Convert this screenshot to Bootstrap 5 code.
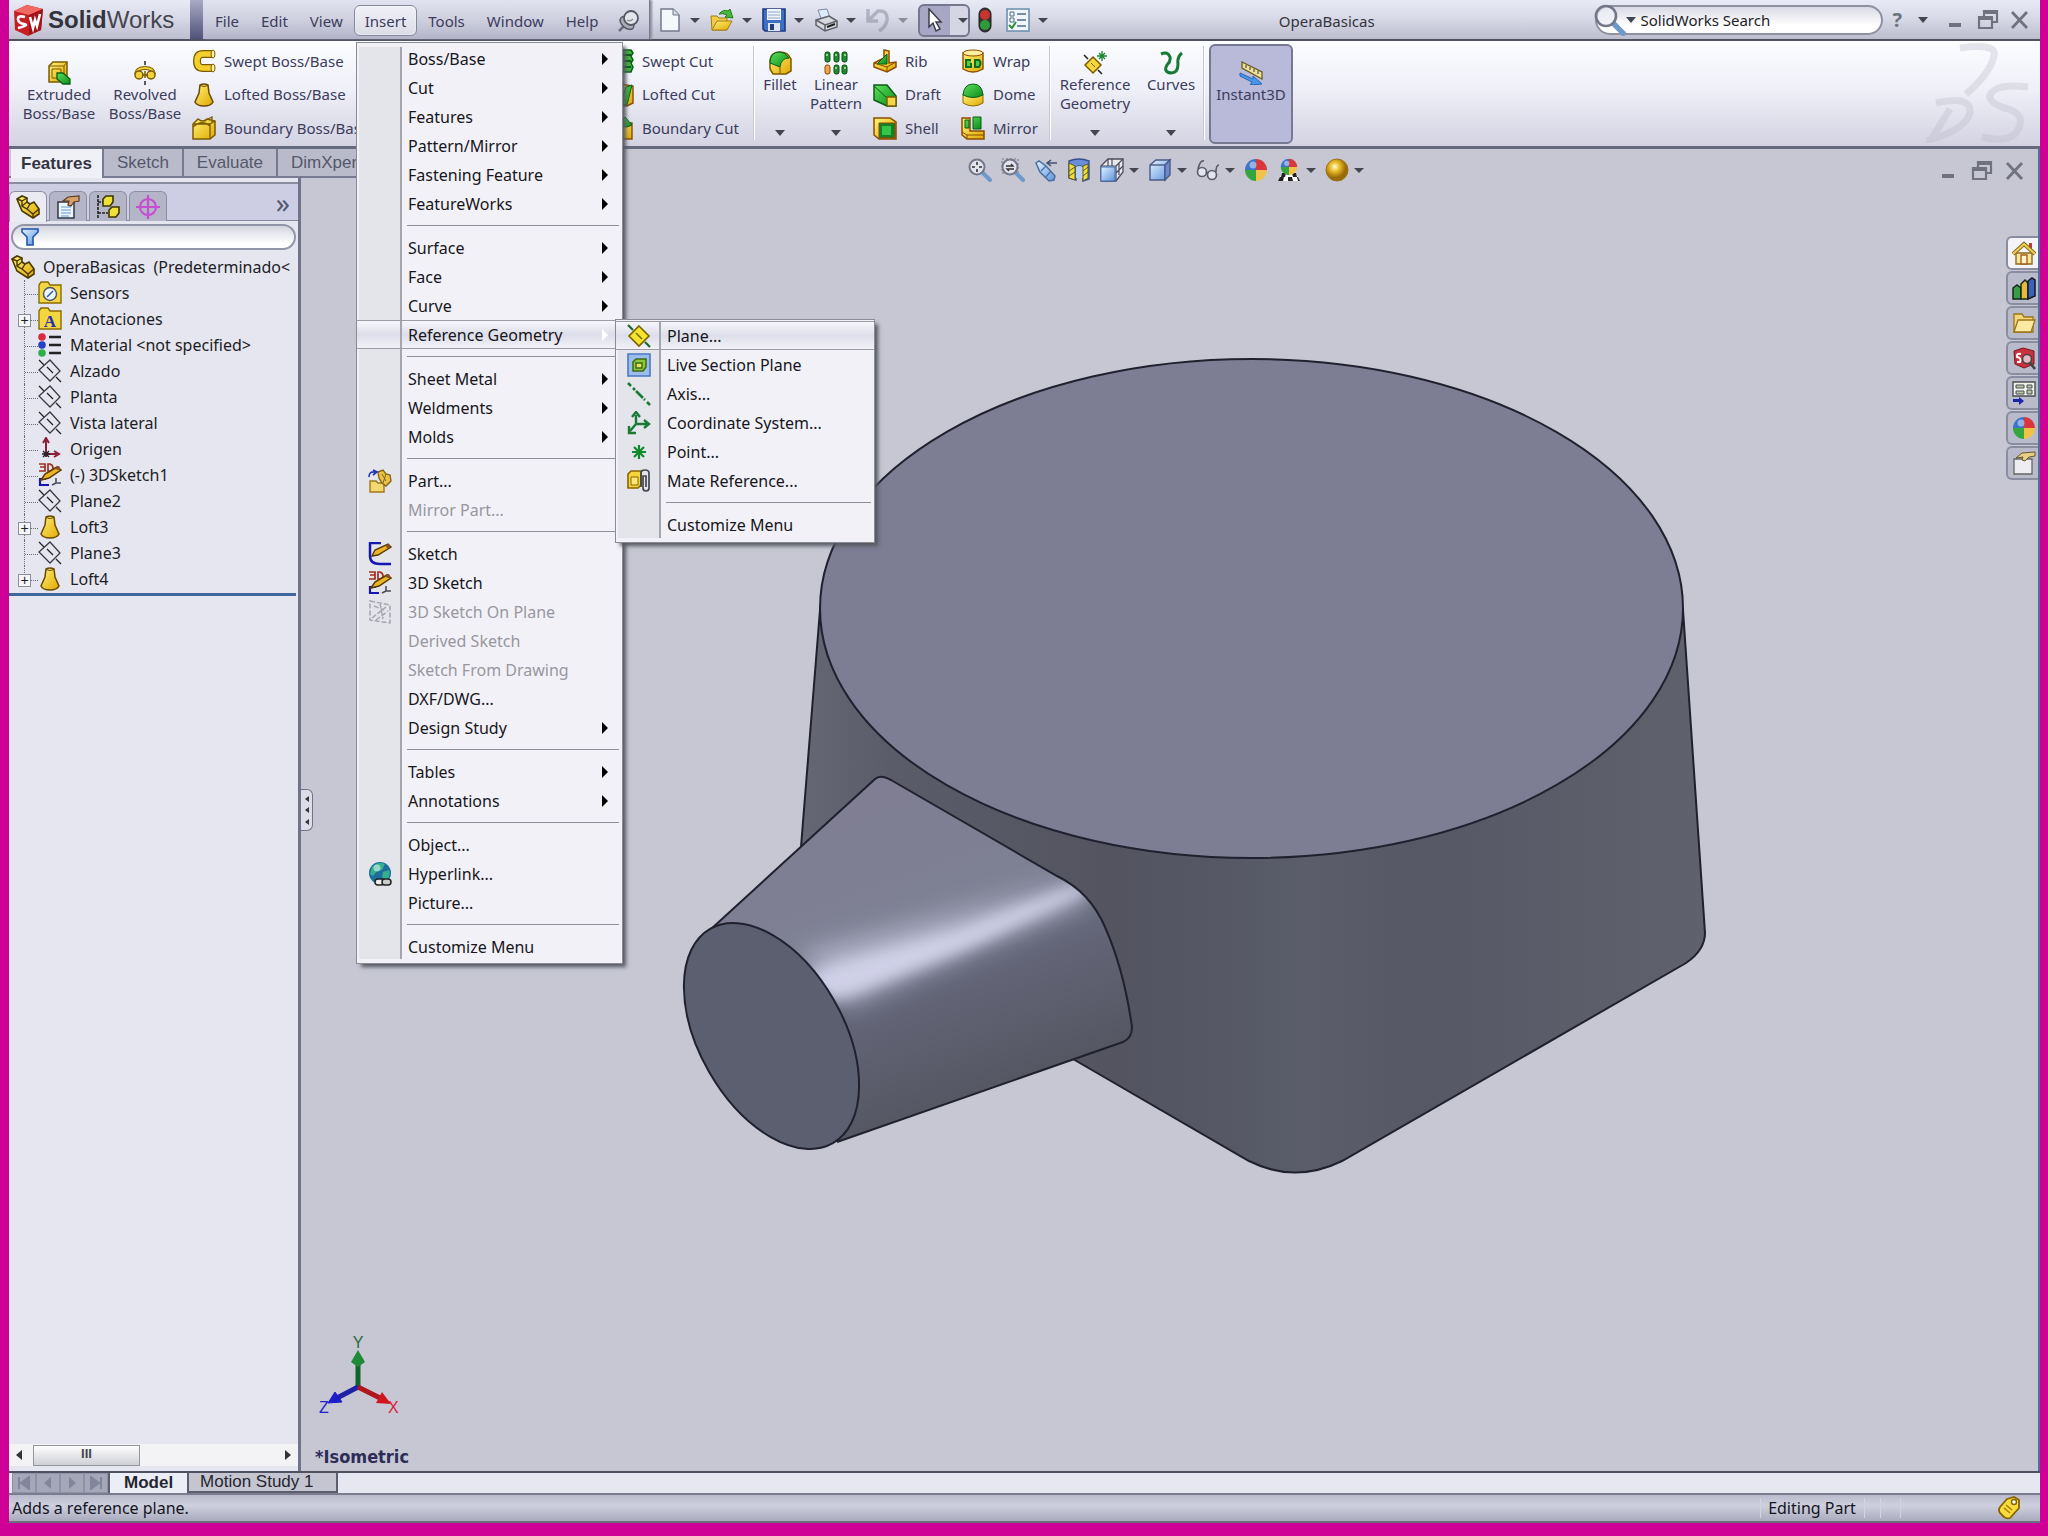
<!DOCTYPE html>
<html lang="en">
<head>
<meta charset="utf-8">
<meta name="viewport" content="width=device-width, initial-scale=1">
<title>OperaBasicas - SolidWorks</title>
<link href="https://cdn.jsdelivr.net/npm/bootstrap@5.3.0/dist/css/bootstrap.min.css" rel="stylesheet">
<style>
:root{--ui:"Noto Sans","Open Sans",sans-serif;--arial:"Liberation Sans",Arial,sans-serif;--ink:#3c3c5c;--edge:#5e6276;--view:#c6c7d3;--pane:#e5e6ef}
body{background:#cf0096;font-family:var(--ui);font-size:16px;line-height:20px;color:#1d1d26;overflow:hidden}
button{background:none;border:0;padding:0;color:inherit;font:inherit;line-height:inherit;white-space:nowrap}
svg.ic{width:24px;height:24px;display:block;flex:none}
.frame{padding:0 8px 13px 9px}
.caret{width:0;height:0;flex:none;border:5px solid transparent;border-top:6px solid #44464f;border-bottom:0}
/* title bar */
.titlebar{height:41px;background:linear-gradient(#e8eaf6,#d9dae8 45%,#bdbdce);border-bottom:2px solid #4e5160}
.brand{width:181px;padding-left:3px;gap:4px;font:700 24px/26px var(--arial);color:#33343c}
.brand b+span{font-weight:400;color:#44454f}
.brand svg{width:32px;height:32px;flex:none}
.divider{width:13px;background:linear-gradient(#a9aac2,#50527a)}
.menus{width:447px;background:linear-gradient(#e2e3f0,#cfd0df 50%,#b3b4c8);border-right:1px solid #7b7d8e;box-shadow:2px 0 2px #8b8d9d;padding:2px 0 0 1px}
.menus .top{height:31px;padding:0 10px;border:1px solid transparent;border-radius:6px;color:var(--ink);font-size:15px}
.menus .top.show{border-color:#85879a;background:linear-gradient(#f0f1f8,#dcdce8);box-shadow:inset 0 0 2px #fff}
.quick{padding-left:8px;padding-top:1px}
.quick .tool{gap:8px;margin-right:10px}
.tool{display:flex;align-items:center}
.quick .pick{height:33px;border:2px solid #75778f;border-radius:6px;background:linear-gradient(90deg,#a7a7c4 62%,#d5d5e4 62%);width:52px;justify-content:space-between;padding:0 4px 0 6px;margin-right:8px}
.doc-title{font-size:15px;color:#34343e;padding-top:2px}
.finder{width:288px;height:30px;border:2px solid #8f91a0;border-radius:15px;background:linear-gradient(#d9d9e4,#fff 70%);margin-right:9px}
.finder input{border:0;background:none;outline:0;width:200px;font-size:15px;padding:0;color:#1d1d26}
.finder input::placeholder{color:#1d1d26;opacity:1}
.finder svg{width:32px;height:32px;margin:0 0 0 -3px}
.wctl svg{width:24px;height:24px}
/* ribbon */
.ribbon{height:108px;background:linear-gradient(#fbfdff,#eff0f8 45%,#d3d3e2);border-bottom:3px solid #666a7d;color:var(--ink);font-size:15px;line-height:19px;padding-left:7px;z-index:1}
.ribbon .big{display:flex;flex-direction:column;align-items:center;text-align:center;white-space:normal;padding-top:10px}
.ribbon .big.low{padding-top:20px}
.ribbon .big .caret{margin-top:auto;margin-bottom:10px}
.w86{width:86px}.w50{width:50px}.w62{width:62px}.w88{width:88px}.w64{width:64px}
.ribbon .stack{display:flex;flex-direction:column;justify-content:space-between;padding:6px 0 4px 2px}
.stack button{display:flex;align-items:center;gap:8px;height:28px}
.ribbon .stack.s1{width:420px;padding-left:4px}.stack.s2{width:145px}.stack.s3{width:88px}.stack.s4{width:90px}
.rule{width:2px;background:linear-gradient(90deg,#c6c7d5 50%,#fff 50%);margin:5px 0 6px;flex:none}
.big.instant{width:84px;margin:3px 0 2px 4px;border:2px solid #777991;border-radius:6px;background:#b9b9da;padding-top:15px}
.dsmark{width:104px;height:100px;margin:2px 10px 0 auto}
/* left column */
.side{width:292px;flex:none;z-index:1}
.cmd-tabs{height:29px;width:400px;background:var(--view);border-bottom:2px solid #777a90;margin-right:-108px;padding-left:2px}
.cmd-tabs button{height:27px;padding:0 13px;background:#b9bbca;border-right:2px solid #777a90;color:#55576a;font:400 17px/25px var(--arial)}
.cmd-tabs button.on{background:#f0f1f7;color:#333443;font-weight:700;height:29px;padding:0 10px}
.tree-pane{border-right:3px solid #70738a;background:var(--pane);padding-top:4px}
.tree-tabs{border-top:2px solid #8a8ca0;border-bottom:1px solid #85879b;background:#cdcee3;height:39px;padding:7px 8px 0 0}
.tree-tabs .tt{width:38px;height:30px;margin-right:2px;border:1px solid #8d8fa3;border-bottom:0;border-radius:6px 6px 0 0;background:#b4b6c8;display:flex;align-items:center;justify-content:center}
.tree-tabs .tt.on{background:#e9eaf2;height:31px}
.more{font-size:28px;line-height:22px;color:#55586c}
.filter{height:26px;border:2px solid #9395a8;border-radius:13px;margin:3px 2px 4px 2px;background:linear-gradient(#d4d5e0,#fff 80%);padding-left:8px}
.filter input{border:0;background:none;outline:0;width:200px;height:20px}
.tree{list-style:none;margin:0;padding:0 0 1px 2px;border-bottom:3px solid #3e659c;margin-right:2px}
.tree li{height:26px;display:flex;align-items:center;position:relative;padding-left:27px;gap:8px;white-space:pre}
.tree li.root{padding-left:0}
.tree li:not(.root)::before{content:"";position:absolute;left:13px;top:0;bottom:0;border-left:1px dotted #6b6d78}
.tree li:last-child::before{bottom:13px!important}
.tree li:not(.root)::after{content:"";position:absolute;left:14px;top:14px;width:13px;border-top:1px dotted #6b6d78}
.tree .plus{position:absolute;left:7px;top:8px;width:13px;height:13px;border:1px solid #8b8d98;background:#f6f6fa;font:400 14px/10px var(--arial);text-align:center;z-index:1}
.hscroll{height:22px;background:#f3f3f5;margin-top:auto;margin-bottom:5px;padding:0 7px}
.hscroll .thumb{width:107px;height:21px;border:1px solid #94969d;background:linear-gradient(#fdfdfd,#cfd0d6);margin-left:11px;color:#44464f;font:700 13px/16px var(--arial);text-align:center}
.lar,.rar{width:0;height:0;border:5px solid transparent}
.lar{border-right:6px solid #333;border-left:0}.rar{border-left:6px solid #333;border-right:0}
/* viewport */
.viewport{background:var(--view);position:relative;border-right:2px solid #4d6f9c;min-width:0}
.model{position:absolute;inset:0;width:100%;height:100%}
.hud{position:relative;padding:9px 0 0 2px}
.hud .tool{gap:5px;margin-right:9px}
.hud .caret,.quick .caret{border-width:5px 5px 0}
.docctl{position:absolute;right:11px;top:10px;gap:9px}
.grip{position:absolute;left:0;top:640px;width:12px;height:42px;background:#dcdde8;border:1px solid #6f7288;border-left:0;border-radius:0 6px 6px 0;display:flex;flex-direction:column;justify-content:space-evenly;align-items:center}
.grip .lar{border-width:3px 4px 3px 0}
.tasks{position:absolute;right:0;top:87px;gap:1px}
.tasks button{width:32px;height:34px;border:2px solid #8a8ca0;border-right:0;border-radius:6px 0 0 6px;background:#b9bbca;padding-left:4px}
.tasks button.on{background:#f4f4f8}
.triad{position:absolute;left:14px;bottom:46px;width:84px;height:94px}
.iso{position:absolute;left:14px;bottom:4px;font:700 18px/20px "DejaVu Sans Condensed","DejaVu Sans",sans-serif;color:#2d2d58}
/* bottom */
.sheets{height:24px;background:#e6e7f1;border-top:2px solid #4e5160;border-bottom:2px solid #7b7d8e;padding-left:3px}
.sheets .nav-b{width:24px;height:20px;background:#a4a7b8;border:1px solid #8f92a5;display:flex;align-items:center;justify-content:center}
.sheets .nav-b svg{width:14px;height:14px}
.sheets .sheet{font:400 17px/18px var(--arial);height:20px;border-right:2px solid #5c5e70;border-bottom:2px solid #5c5e70;background:#c4c5d1;padding:0 22px 0 11px;color:#26262f}
.sheets .sheet.on{font-weight:700;background:#eceef7;padding:0 14px;border-left:2px solid #5c5e70;border-bottom:0}
.status{height:28px;background:linear-gradient(#b9bacb,#cfd0df 40%,#a9abbd);border-bottom:2px solid #6d6f80;padding:0 19px 0 3px;color:#15151d}
.cell{border:solid #d3d4e0;border-width:0 1px;padding:0 8px 0 7px;margin-right:15px}
/* menus */
.sw-menu{position:absolute;z-index:10;background:#f2f1f7;border:1px solid #8a8b95;box-shadow:4px 4px 4px -1px #55575f;color:#16161c;margin:0;list-style:none}
.menu-main{left:356px;top:42px;width:267px;padding:1px 0 2px}
.menu-sub{left:615px;top:319px;width:260px;padding:1px 0 3px}
.sw-menu::before{content:"";position:absolute;left:2px;top:4px;bottom:4px;width:43px;background:#e3e5ea;border-right:2px solid #a4a5ad}
.sw-menu li{position:relative}
.sw-menu button{display:flex;align-items:center;width:100%;height:29px;text-align:left}
.sw-menu button>.slot{width:51px;padding-left:11px;flex:none}
.sw-menu button.rest{border:solid #9b9ca6;border-width:1px 0;background:linear-gradient(90deg,transparent 43px,#a4a5ad 43px,#a4a5ad 45px,transparent 45px),linear-gradient(#f6f6fb,#dddeea 50%,#f2f1f7)}
.sw-menu button:disabled{color:#97979f}
.sw-menu hr{margin:7px 3px 7px 50px;border:0;border-top:1px solid #8f9099;opacity:1;height:0}
.sw-menu .rar{margin-left:auto;margin-right:14px;border-width:6px 0 6px 6px;border-left-color:#000}
.sw-menu .rar.lite{border-left-color:#fff}
</style>
<script src="https://cdn.jsdelivr.net/npm/bootstrap@5.3.0/dist/js/bootstrap.bundle.min.js"></script>
</head>
<body>
<svg width="0" height="0" class="position-absolute" aria-hidden="true">
<defs>
<linearGradient id="gy" x2="1" y2="1"><stop stop-color="#fff27a"/><stop offset="1" stop-color="#e0a800"/></linearGradient>
<linearGradient id="gg" x2="1" y2="1"><stop stop-color="#5fe35a"/><stop offset="1" stop-color="#0a8a1c"/></linearGradient>
<linearGradient id="gb" x2="1" y2="1"><stop stop-color="#e5f3ff"/><stop offset="1" stop-color="#5b93dd"/></linearGradient>
<radialGradient id="gold" cx=".4" cy=".35"><stop stop-color="#fffbe0"/><stop offset=".4" stop-color="#eec22e"/><stop offset="1" stop-color="#9a6a08"/></radialGradient>
<symbol id="plane" viewBox="0 0 24 24"><path d="M1 1l5 5M18 18l5 5M9 8l6 6" stroke="#222" stroke-width="1.3"/><path d="M12 1l10 11-10 10L1 11z" fill="none" stroke="#3a3a44" stroke-width="1.3"/></symbol>
<symbol id="loft" viewBox="0 0 24 24"><path d="M8 2q4-2 8 0l1 8 4 9q-2 4-9 4t-9-4l4-9z" fill="url(#gy)" stroke="#6b4a00" stroke-width="1.5"/><path d="M8 2.500q4 2 8 0" fill="none" stroke="#6b4a00"/></symbol>
<symbol id="part" viewBox="0 0 24 24"><path d="M1 4l5-3 5 2v4l3 2 4-2 5 7v5l-6 4-11-7z" fill="url(#gy)" stroke="#4b3900" stroke-width="1.600"/><path d="M1 4l5 2 5-3M6 6v5l5 3 3-5M11 14l6 5 6-5M17 19v4M11 7l-5 4" fill="none" stroke="#4b3900" stroke-width="1.400"/></symbol>
<symbol id="folder" viewBox="0 0 24 24"><path d="M1 4l2-3h7l2 3h11v18H1z" fill="#f3d740" stroke="#8a6c00" stroke-width="1.4"/></symbol>
<symbol id="sk3d" viewBox="0 0 24 24"><path d="M1 1h6v7H1m1-4h5M10 1v7h2q3 0 3-3t-3-4z" fill="none" stroke="#a32c20" stroke-width="1.7"/><path d="M8 16H2v6h9" fill="none" stroke="#1616b8" stroke-width="2.200"/><path d="M14 22l4-2v-5M18 20h5" fill="none" stroke="#4a4c58" stroke-width="1.600"/><path d="M3 17l4-6L19 4l4 3-12 8z" fill="#edb526" stroke="#5a3c00" stroke-width="1.500"/><circle cx="20" cy="5" r="2" fill="#8a4a2c"/></symbol>
<symbol id="sk" viewBox="0 0 24 24"><path d="M13 1H2v13q0 8 10 8h11" fill="none" stroke="#1616b0" stroke-width="2.500"/><path d="M4 14l3-6L20 2l3 3L10 13z" fill="#edb526" stroke="#5a3c00" stroke-width="1.4"/><circle cx="20" cy="4" r="2" fill="#8a4a2c"/></symbol>
<symbol id="mag" viewBox="0 0 24 24"><path d="M15 15l7 7" stroke="#6e9acb" stroke-width="4" stroke-linecap="round"/><circle cx="9" cy="9" r="7.500" fill="#eef0f8" fill-opacity=".7" stroke="#74778a" stroke-width="2"/></symbol>
<symbol id="ball" viewBox="0 0 24 24"><path d="M12 12V1a11 11 0 0 1 11 11z" fill="#d8383c"/><path d="M12 12h11a11 11 0 0 1-11 11z" fill="#f2c14a"/><path d="M12 12v11A11 11 0 0 1 1 12z" fill="#35a53e"/><path d="M12 12H1A11 11 0 0 1 12 1z" fill="#3c73cc"/><circle cx="9" cy="7" r="3.500" fill="#fff" opacity=".45"/></symbol>
<symbol id="cube" viewBox="0 0 24 24"><path d="M2 7l6-5h14l-5 5v15H2z" fill="url(#gb)" stroke="#4a5a86" stroke-width="1.4"/><path d="M17 7l5-5v15l-5 5z" fill="#6d89cf" stroke="#4a5a86" stroke-width="1.4"/><path d="M2 7h15" stroke="#4a5a86" stroke-width="1.4"/></symbol>
<symbol id="wmin" viewBox="0 0 24 24"><path d="M5 15h12v4H5z" fill="#70727f"/></symbol>
<symbol id="wres" viewBox="0 0 24 24"><path d="M8 8V3h13v11h-5M8 5h13M3 9h13v11H3zM3 11h13" fill="none" stroke="#70727f" stroke-width="2.200"/></symbol>
<symbol id="wx" viewBox="0 0 24 24"><path d="M4 4l15 16M19 4L4 20" stroke="#70727f" stroke-width="2.800"/></symbol>
<symbol id="hand" viewBox="0 0 24 24"><path d="M2 7h16v16H2z" fill="#eef4fb" stroke="#333844" stroke-width="1.500"/><path d="M5 12h10M5 15h10M5 18h10M5 21h8" stroke="#5f9ad0" stroke-width="1.200"/><path d="M7 6l5-4 11-1v5l-5 1-3 4-3-1 1-4z" fill="#d9a06c" stroke="#5a3a1c" stroke-width="1.200"/></symbol>
</defs>
</svg>

<div class="frame vh-100 d-flex flex-column">
<header class="titlebar d-flex align-items-stretch flex-shrink-0">
 <div class="brand d-flex align-items-center">
  <svg viewBox="0 0 32 32"><path d="M2 7L15 1l16 4-2 21-13 6L3 26z" fill="#c51f24"/><path d="M2 7L15 1l16 4-14 6z" fill="#ee6a63"/><path d="M17 11v20l12-5 2-21z" fill="#a11318"/><path d="M13 13q-7-2-7 2t6 5-6 4M18 13l3 11 2-8 2 6 3-12" fill="none" stroke="#fff" stroke-width="2.600"/></svg>
  <div><b>Solid</b><span>Works</span></div>
 </div>
 <div class="divider"></div>
 <nav class="menus d-flex align-items-center">
  <button class="top">File</button><button class="top">Edit</button><button class="top">View</button><button class="top show" aria-expanded="true">Insert</button><button class="top">Tools</button><button class="top">Window</button><button class="top">Help</button>
  <button class="ms-auto me-2" aria-label="Pin"><svg class="ic" viewBox="0 0 24 24"><path d="M2 22l5-5" stroke="#6d6f7c" stroke-width="2.500"/><ellipse cx="10" cy="14" rx="8" ry="5" transform="rotate(40 10 14)" fill="#aaacb8" stroke="#555763" stroke-width="1.500"/><circle cx="14" cy="9" r="7" fill="#e4e5ec" stroke="#555763" stroke-width="1.800"/><path d="M10 11q3 2 6-1" fill="none" stroke="#8b8d99" stroke-width="1.500"/></svg></button>
 </nav>
 <div class="quick d-flex align-items-center">
  <button class="tool" aria-label="New"><svg class="ic" viewBox="0 0 24 24"><path d="M3 1h12l6 6v16H3z" fill="#f4f8fc" stroke="#737b8a" stroke-width="1.500"/><path d="M15 1v6h6" fill="#cfdbe8" stroke="#737b8a"/></svg><i class="caret"></i></button>
  <button class="tool" aria-label="Open"><svg class="ic" viewBox="0 0 24 24"><path d="M1 8h6l2 2h8v12H2z" fill="#f1cc4a" stroke="#a47e10"/><path d="M2 22l5-9h15l-5 9z" fill="url(#gy)" stroke="#a47e10"/><path d="M9 6q4-5 9-3l2-2 3 9-8-1 2-2q-4-2-8-1z" fill="#46b83c" stroke="#267a1e"/></svg><i class="caret"></i></button>
  <button class="tool" aria-label="Save"><svg class="ic" viewBox="0 0 24 24"><path d="M1 1h22v22H3l-2-2z" fill="#3d6fc4" stroke="#1f3b80" stroke-width="1.600"/><path d="M5 1h14v11H5z" fill="#f2f6fc"/><path d="M6 4h12M6 7h12M6 10h12" stroke="#8aa4c8"/><path d="M6 15h12v8H6z" fill="#dde4ee"/><path d="M8 16h4v6H8z" fill="#1f3b80"/></svg><i class="caret"></i></button>
  <button class="tool" aria-label="Print"><svg class="ic" viewBox="0 0 24 24"><path d="M4 2l9-1 3 9-8 3z" fill="#dcecfb" stroke="#7e8aa0"/><path d="M2 12l13-4 8 5v6l-12 4-9-6z" fill="#d8d9de" stroke="#5f616b" stroke-width="1.500"/><path d="M2 12l9 5 12-4M11 17v6" fill="none" stroke="#5f616b" stroke-width="1.500"/><path d="M13 19l8-3" stroke="#222" stroke-width="2"/></svg><i class="caret"></i></button>
  <button class="tool opacity-50" aria-label="Undo"><svg class="ic" viewBox="0 0 24 24"><path d="M2 1v12h10M3 12L12 3q10-1 9 9-1 7-8 11" fill="none" stroke="#85879a" stroke-width="3.500"/></svg><i class="caret"></i></button>
  <button class="tool pick" aria-label="Select"><svg class="ic" viewBox="0 0 24 24"><path d="M3 1l12 13h-5l4 7-4 2-3-8-4 4z" fill="#fff" stroke="#3b3d4a" stroke-width="1.500"/></svg><i class="caret"></i></button>
  <button class="tool" aria-label="Rebuild"><svg width="14" height="26" viewBox="0 0 14 26"><rect x="1" y="1" width="12" height="24" rx="6" fill="#333" stroke="#222"/><circle cx="7" cy="8" r="5" fill="#c9342e"/><circle cx="7" cy="18" r="5" fill="#2f9c3a"/></svg></button>
  <button class="tool ms-1" aria-label="Options"><svg class="ic" viewBox="0 0 24 24"><path d="M1 1h22v22H1z" fill="#f0f6fb" stroke="#6b8fae" stroke-width="1.600"/><path d="M11 6h9M11 12h9M11 18h9" stroke="#506a88" stroke-width="1.500"/><path d="M4 4h4v4H4zM4 10h4v4H4z" fill="none" stroke="#506a88"/><path d="M3 17l3 3 4-6" fill="none" stroke="#2a8c2e" stroke-width="2"/></svg><i class="caret"></i></button>
 </div>
 <div class="doc-title flex-grow-1 text-center align-self-center">OperaBasicas</div>
 <div class="finder d-flex align-items-center align-self-center">
  <svg viewBox="0 0 24 24"><use href="#mag"/></svg><i class="caret me-1"></i><input type="search" aria-label="SolidWorks Search" placeholder="SolidWorks Search">
 </div>
 <div class="wctl d-flex align-items-center me-2">
  <button class="fw-bold fs-5 text-secondary" aria-label="Help">?</button><i class="caret mx-3"></i>
  <button aria-label="Minimize"><svg><use href="#wmin"/></svg></button><button class="mx-2" aria-label="Restore"><svg><use href="#wres"/></svg></button><button aria-label="Close"><svg><use href="#wx"/></svg></button>
 </div>
</header>

<section class="ribbon d-flex align-items-stretch flex-shrink-0">
 <button class="big low w86"><svg class="ic" viewBox="0 0 24 24"><path d="M2 5l4-4h14v16l-3 4H2z" fill="url(#gy)" stroke="#7b5b00" stroke-width="1.500"/><path d="M5 8h9v9H5zM2 5h15v16M17 5l3-4" fill="none" stroke="#7b5b00"/><path d="M10 12h6l7 6v5h-7l-6-5z" fill="url(#gg)" stroke="#0b5d16" stroke-width="1.300"/></svg>Extruded Boss/Base</button>
 <button class="big low w86"><svg class="ic" viewBox="0 0 24 24"><path d="M12 0v4M12 20v4" stroke="#333" stroke-width="1.600"/><path d="M3 13Q4 7 12 7t9 6" fill="none" stroke="#7b5b00" stroke-width="4"/><path d="M3 13Q4 7 12 7t9 6" fill="none" stroke="#f2d23a" stroke-width="2"/><circle cx="6" cy="14" r="4" fill="#f2d23a" stroke="#7b5b00" stroke-width="1.500"/><circle cx="18" cy="14" r="4" fill="#f2d23a" stroke="#7b5b00" stroke-width="1.500"/><path d="M9 14h6M12 10v7" stroke="#7b5b00" stroke-width="1.500"/></svg>Revolved Boss/Base</button>
 <div class="stack s1">
  <button><svg class="ic" viewBox="0 0 24 24"><path d="M22 5H11q-6 0-6 7t6 7h11" fill="none" stroke="#7b5b00" stroke-width="8"/><path d="M22 5H11q-6 0-6 7t6 7h11" fill="none" stroke="#f3d02c" stroke-width="5.500"/><ellipse cx="21" cy="5" rx="2" ry="4" fill="#fff0a0" stroke="#7b5b00"/><ellipse cx="21" cy="19" rx="2" ry="4" fill="#fff0a0" stroke="#7b5b00"/></svg>Swept Boss/Base</button>
  <button><svg class="ic"><use href="#loft"/></svg>Lofted Boss/Base</button>
  <button><svg class="ic" viewBox="0 0 24 24"><path d="M1 8l5-5q5 4 9 0l8 2v14l-5 4H1z" fill="url(#gy)" stroke="#7b5b00" stroke-width="1.500"/><path d="M1 8h17v15M18 8l5-3M1 11q9-8 17-1M12 5l8-4v5" fill="none" stroke="#7b5b00" stroke-width="1.300"/></svg>Boundary Boss/Base</button>
 </div>
 <div class="stack s2">
  <button><svg class="ic" viewBox="0 0 24 24"><path d="M5 1h16l2 3-2 3 2 4-2 3 2 4-2 5H5z" fill="#3db53a" stroke="#0b5d16" stroke-width="1.500"/><path d="M5 6h16M5 12h16M5 18h16" stroke="#0b5d16" stroke-width="2"/></svg>Swept Cut</button>
  <button><svg class="ic" viewBox="0 0 24 24"><path d="M5 5l6-4 12 2v17l-6 3H5z" fill="url(#gy)" stroke="#8d4b00" stroke-width="1.400"/><path d="M10 22l6-18 6-2-5 20z" fill="url(#gg)" stroke="#0b5d16"/></svg>Lofted Cut</button>
  <button><svg class="ic" viewBox="0 0 24 24"><path d="M4 10l4-3h14v16H4z" fill="url(#gy)" stroke="#8d4b00" stroke-width="1.400"/><path d="M8 10l7-9 7 8-5 2z" fill="url(#gg)" stroke="#0b5d16"/></svg>Boundary Cut</button>
 </div>
 <div class="rule"></div>
 <button class="big w50"><svg class="ic" viewBox="0 0 24 24"><path d="M2 9q1-8 10-8 8 0 11 7v12l-5 3H5l-3-5z" fill="url(#gy)" stroke="#7b5b00" stroke-width="1.500"/><path d="M2 12q0-11 10-11 5 0 9 6-8 0-9 9z" fill="url(#gg)" stroke="#0b5d16"/><path d="M12 16v7" stroke="#7b5b00"/></svg>Fillet<i class="caret"></i></button>
 <button class="big w62"><svg class="ic" viewBox="0 0 24 24"><g fill="#1f8a2e" stroke="#0b4d16"><rect x="1" y="1" width="5" height="10" rx="2"/><rect x="10" y="1" width="5" height="10" rx="2"/><rect x="18" y="1" width="5" height="10" rx="2"/><rect x="10" y="14" width="5" height="9" rx="2"/><rect x="18" y="14" width="5" height="9" rx="2"/></g><rect x="1" y="14" width="5" height="9" rx="2" fill="#f1a24a" stroke="#8a4b0b"/><path d="M3 3v2M12 3v2M21 3v2M12 16v2M21 16v2" stroke="#bff0b4" stroke-width="1.500"/></svg>Linear Pattern<i class="caret"></i></button>
 <div class="stack s3 ms-1">
  <button><svg class="ic" viewBox="0 0 24 24"><path d="M1 14l10-5V1l5 1v12l7-1v5l-9 5-13-5z" fill="url(#gy)" stroke="#8d4b00" stroke-width="1.500"/><path d="M4 15L14 5v10z" fill="url(#gg)" stroke="#0b5d16"/><path d="M1 14l13 4 9-5M14 18v5" fill="none" stroke="#8d4b00"/></svg>Rib</button>
  <button><svg class="ic" viewBox="0 0 24 24"><path d="M1 2h13l9 11v10h-9L1 17z" fill="url(#gg)" stroke="#0b5d16" stroke-width="1.500"/><path d="M1 3l13 12M14 2v1" stroke="#0b5d16"/><path d="M14 14h9v9h-9z" fill="#f6d44a" stroke="#7b5b00" stroke-width="1.400"/></svg>Draft</button>
  <button><svg class="ic" viewBox="0 0 24 24"><path d="M1 2h16l6 4v17H6l-5-4z" fill="url(#gy)" stroke="#8d4b00" stroke-width="1.500"/><path d="M6 7h16v15H6z" fill="#14812a" stroke="#8d4b00"/><path d="M9 10h9v9H9z" fill="#35c648"/></svg>Shell</button>
 </div>
 <div class="stack s4">
  <button><svg class="ic" viewBox="0 0 24 24"><path d="M2 4v16q10 6 20 0V4z" fill="url(#gy)" stroke="#8d4b00" stroke-width="1.400"/><ellipse cx="12" cy="4" rx="10" ry="3" fill="#fff0a0" stroke="#8d4b00"/><path d="M10 11H5v7h5v-4M14 11h4q3 3 0 7h-4z" fill="#58c848" stroke="#0b6d1c" stroke-width="2"/></svg>Wrap</button>
  <button><svg class="ic" viewBox="0 0 24 24"><path d="M2 11v9q10 6 20 0v-9z" fill="url(#gy)" stroke="#8d6a00"/><path d="M2 12Q3 1 12 1t10 11q-10 5-20 0z" fill="url(#gg)" stroke="#0b5d16"/></svg>Dome</button>
  <button><svg class="ic" viewBox="0 0 24 24"><path d="M1 2h8v13h14v8H6l-5-4z" fill="url(#gy)" stroke="#8d4b00" stroke-width="1.500"/><path d="M12 1h8v12h-8zM4 4h4v8H4z" fill="url(#gg)" stroke="#0b5d16"/><path d="M1 16l5 3h17M6 19v4" fill="none" stroke="#8d4b00"/></svg>Mirror</button>
 </div>
 <div class="rule"></div>
 <button class="big w88"><svg class="ic" viewBox="0 0 24 24"><path d="M1 4l4 4M15 19l4 4" stroke="#222" stroke-width="1.600"/><path d="M10 6l8 8-8 8-8-8z" fill="#f4d83a" stroke="#7b5b00" stroke-width="1.500"/><path d="M8 12l4 4" stroke="#7b5b00"/><path d="M19 0v10M14 5h10M16 2l6 6M22 2l-6 6" stroke="#1d8a2c" stroke-width="1.400"/></svg>Reference Geometry<i class="caret"></i></button>
 <button class="big w64"><svg class="ic" viewBox="0 0 24 24"><path d="M2 3q7-3 9 3 1 4-3 8-4 7 4 8 7 0 7-9-1-7 4-11" fill="none" stroke="#157a35" stroke-width="3"/></svg>Curves<i class="caret"></i></button>
 <div class="rule"></div>
 <button class="big instant"><svg class="ic" viewBox="0 0 24 24"><path d="M3 1l20 10v7L3 7z" fill="#efe09a" stroke="#6a5a20" stroke-width="1.300"/><path d="M7 4v3M11 6v3M15 8v3M19 10v3" stroke="#333"/><path d="M1 12l13 6 0-3 9 8-12 1 2-3-12-6z" fill="#4a95e8" stroke="#2466b4"/></svg>Instant3D</button>
 <svg class="dsmark" viewBox="0 0 104 100"><g fill="none" stroke="#b9bbc9" stroke-opacity=".35" stroke-width="7"><path d="M34 5q38-5 34 8-4 18-28 38"/><path d="M10 60q36-8 34 10-6 18-44 28M4 98l20-32"/><path d="M102 44q-32-4-38 8-2 8 18 14t8 24q-10 10-34 4"/></g></svg>
</section>

<main class="d-flex flex-grow-1 align-items-stretch overflow-hidden">
 <div class="side d-flex flex-column">
  <div class="cmd-tabs d-flex flex-shrink-0"><button class="on">Features</button><button>Sketch</button><button>Evaluate</button><button>DimXpert</button></div>
  <div class="tree-pane d-flex flex-column flex-grow-1">
   <div class="tree-tabs d-flex align-items-start flex-shrink-0">
    <button class="tt on" aria-label="Feature tree"><svg class="ic"><use href="#part"/></svg></button>
    <button class="tt" aria-label="Properties"><svg class="ic"><use href="#hand"/></svg></button>
    <button class="tt" aria-label="Configurations"><svg class="ic" viewBox="0 0 24 24"><path d="M2 0v24M2 7h7M2 18h10" stroke="#222" stroke-width="1.600" stroke-dasharray="3 1"/><path d="M7 4l3-3h7v6l-3 4H7zM13 15l3-3h7v6l-3 4h-7z" fill="#f0e03a" stroke="#3c3600" stroke-width="1.600"/></svg></button>
    <button class="tt" aria-label="DimXpert manager"><svg class="ic" viewBox="0 0 24 24"><circle cx="12" cy="12" r="8" fill="none" stroke="#c44fd0" stroke-width="2.200"/><path d="M12 0v24M0 12h24" stroke="#c44fd0" stroke-width="2.200"/></svg></button>
    <button class="more ms-auto" aria-label="Expand">»</button>
   </div>
   <div class="filter d-flex align-items-center flex-shrink-0"><svg width="18" height="18" viewBox="0 0 18 18"><path d="M1 1h16v3l-5 5v8H6V9L1 4z" fill="url(#gb)" stroke="#1e55a8" stroke-width="1.600"/></svg><input type="text" aria-label="Filter"></div>
   <ul class="tree">
    <li class="root"><svg class="ic"><use href="#part"/></svg>OperaBasicas  (Predeterminado&lt;</li>
    <li><svg class="ic" viewBox="0 0 24 24"><use href="#folder"/><circle cx="12" cy="13" r="6.500" fill="#eef4fa" stroke="#44536a" stroke-width="1.400"/><path d="M9 16l6-6" stroke="#2c66a8" stroke-width="1.600"/></svg>Sensors</li>
    <li><i class="plus fst-normal">+</i><svg class="ic" viewBox="0 0 24 24"><use href="#folder"/><text x="12" y="20" text-anchor="middle" font-family="Liberation Serif" font-weight="700" font-size="17" fill="#1f2fb0">A</text></svg>Anotaciones</li>
    <li><svg class="ic" viewBox="0 0 24 24"><circle cx="4" cy="4" r="3.800" fill="#d82c3c"/><circle cx="4" cy="12" r="3.800" fill="#2640c8"/><circle cx="4" cy="20" r="3.800" fill="#2fae48"/><path d="M11 4h12M11 12h12M11 20h12" stroke="#222" stroke-width="2.600"/></svg>Material &lt;not specified&gt;</li>
    <li><svg class="ic"><use href="#plane"/></svg>Alzado</li>
    <li><svg class="ic"><use href="#plane"/></svg>Planta</li>
    <li><svg class="ic"><use href="#plane"/></svg>Vista lateral</li>
    <li><svg class="ic" viewBox="0 0 24 24"><path d="M8 20V3M5 6l3-5 3 5M8 17h11M16 14l5 3-5 3" fill="none" stroke="#8d1f38" stroke-width="2"/><path d="M4 17h8M5 14l6 6M11 14l-6 6" stroke="#222" stroke-width="1.400"/></svg>Origen</li>
    <li><svg class="ic"><use href="#sk3d"/></svg>(-) 3DSketch1</li>
    <li><svg class="ic"><use href="#plane"/></svg>Plane2</li>
    <li><i class="plus fst-normal">+</i><svg class="ic"><use href="#loft"/></svg>Loft3</li>
    <li><svg class="ic"><use href="#plane"/></svg>Plane3</li>
    <li><i class="plus fst-normal">+</i><svg class="ic"><use href="#loft"/></svg>Loft4</li>
   </ul>
   <div class="hscroll d-flex align-items-center flex-shrink-0"><i class="lar"></i><div class="thumb">III</div><i class="rar ms-auto"></i></div>
  </div>
 </div>

 <section class="viewport flex-grow-1">
  <svg class="model" viewBox="301 149 1737 1322" role="img" aria-label="Loft model">
   <defs>
    <linearGradient id="body" gradientUnits="userSpaceOnUse" x1="801" y1="0" x2="1705" y2="0"><stop stop-color="#666774"/><stop offset=".1" stop-color="#5b5c69"/><stop offset=".35" stop-color="#545461"/><stop offset=".48" stop-color="#565866"/><stop offset=".56" stop-color="#5b5e6a"/><stop offset=".68" stop-color="#575866"/><stop offset="1" stop-color="#5f616c"/></linearGradient>
    <linearGradient id="cone" gradientUnits="userSpaceOnUse" x1="880" y1="800" x2="985" y2="1090"><stop stop-color="#7f7e93"/><stop offset=".4" stop-color="#7e8093"/><stop offset=".6" stop-color="#65677a"/><stop offset="1" stop-color="#555763"/></linearGradient>
    <filter id="soft" x="-20%" y="-80%" width="140%" height="260%"><feGaussianBlur stdDeviation="13"/></filter>
    <filter id="fine" x="-20%" y="-80%" width="140%" height="260%"><feGaussianBlur stdDeviation="7"/></filter>
    <clipPath id="conec"><path d="M710 930L872 783Q880 774 891 780L1057 876Q1090 892 1105 927Q1124 970 1132 1027Q1132 1038 1123 1042L837 1142L760 1120z"/></clipPath>
   </defs>
   <path d="M820 610L801 847L1073 1059L1249 1161Q1295 1184 1342 1161L1686 963Q1705 950 1705 933L1683 610z" fill="url(#body)" stroke="#20202e" stroke-width="2"/>
   <ellipse cx="1251.500" cy="608.500" rx="431.500" ry="249.500" fill="#7d7d93" stroke="#20202e" stroke-width="2"/>
   <g clip-path="url(#conec)"><path d="M700 760h450v400H700z" fill="url(#cone)"/><path d="M800 955L1085 880L1085 900L845 1005z" fill="#b4b5cb" filter="url(#soft)"/><path d="M800 975L960 930L1090 880L1090 890L965 948L835 1000z" fill="#d0d1e8" filter="url(#fine)"/></g>
   <path d="M710 930L875 779Q880 774 891 780L1057 876Q1090 892 1105 927Q1124 970 1132 1027Q1132 1038 1123 1042L837 1142" fill="none" stroke="#20202e" stroke-width="2"/>
   <ellipse cx="771.500" cy="1036" rx="123.500" ry="72" transform="rotate(60.200 771.500 1036)" fill="#5c5f70" stroke="#20202e" stroke-width="2"/>
  </svg>
  <div class="hud d-flex justify-content-center">
   <button class="tool" aria-label="Zoom to fit"><svg class="ic" viewBox="0 0 24 24"><use href="#mag"/><path d="M9 4v3M9 11v3M4 9h3M11 9h3" stroke="#333" stroke-width="1.600"/></svg></button>
   <button class="tool" aria-label="Zoom to area"><svg class="ic" viewBox="0 0 24 24"><path d="M1 1h16v14H1z" fill="none" stroke="#777" stroke-dasharray="2"/><use href="#mag"/><path d="M5 8h7l-2-2M13 11H6l2 2" fill="none" stroke="#333" stroke-width="1.400"/></svg></button>
   <button class="tool" aria-label="Previous view"><svg class="ic" viewBox="0 0 24 24"><path d="M2 5l3-2 7 5 9 10-1 4-5 1L6 14z" fill="url(#gb)" stroke="#4b6f9e" stroke-width="1.500"/><path d="M12 8l-5 5M17 13l-5 6" stroke="#4b6f9e" stroke-width="1.300"/><path d="M23 5h-9M17 2l-4 3 4 3" fill="none" stroke="#44546e" stroke-width="1.500"/></svg></button>
   <button class="tool" aria-label="Section view"><svg class="ic" viewBox="0 0 24 24"><path d="M2 3q10-4 20 0v18l-6 2V9q-4-2-7 0v13l-7-2z" fill="#6a8fd8" stroke="#34508c" stroke-width="1.400"/><path d="M9 9q3-2 7 0v11H9z" fill="#b9d0f4"/><path d="M2 5l6 3v14l-6-2zM16 8l5-2v14l-5 3z" fill="#f1dc3c" stroke="#5a5a20"/><path d="M2 13l6-4M2 18l6-4M16 13l5-4M16 18l5-4" stroke="#5a5a20"/></svg></button>
   <button class="tool" aria-label="View orientation"><svg class="ic" viewBox="0 0 24 24"><path d="M1 8l7-7h15v13l-7 9H1z" fill="#e9eaf0" stroke="#4a4c5a" stroke-width="1.300"/><path d="M1 8h15v15M8 1v7M16 8l7-7M12 1v7M19 5v12M16 15l7-7" fill="none" stroke="#4a4c5a" stroke-width="1.200"/><path d="M1 9h14v14H1z" fill="url(#gb)" stroke="#3a6fb4"/></svg><i class="caret"></i></button>
   <button class="tool" aria-label="Display style"><svg class="ic"><use href="#cube"/></svg><i class="caret"></i></button>
   <button class="tool" aria-label="Hide/show items"><svg class="ic" viewBox="0 0 24 24"><circle cx="6" cy="14" r="4.500" fill="#e4e5ee" stroke="#5a5c6a" stroke-width="1.700"/><circle cx="16" cy="17" r="4.500" fill="#e4e5ee" stroke="#5a5c6a" stroke-width="1.700"/><path d="M2 11q2-9 6-8M20 14q0-7 3-7M10 14l2 1" fill="none" stroke="#5a5c6a" stroke-width="1.600"/></svg><i class="caret"></i></button>
   <button class="tool" aria-label="Edit appearance"><svg class="ic"><use href="#ball"/></svg></button>
   <button class="tool" aria-label="Apply scene"><svg class="ic" viewBox="0 0 24 24"><path d="M1 23l5-9h12l5 9z" fill="#fff"/><path d="M1 23l2-4h4l-1 4zM5 15h4l-1 4H4zM11 19h4l1 4h-5zM15 15h4l1 4h-4zM20 19h1l2 4h-2z" fill="#222"/><use href="#ball" x="3" y="0" width="18" height="18"/></svg><i class="caret"></i></button>
   <button class="tool" aria-label="View settings"><svg class="ic" viewBox="0 0 24 24"><circle cx="12" cy="12" r="11" fill="url(#gold)" stroke="#9a741a"/></svg><i class="caret"></i></button>
  </div>
  <div class="docctl d-flex"><button aria-label="Minimize document"><svg class="ic"><use href="#wmin"/></svg></button><button aria-label="Restore document"><svg class="ic"><use href="#wres"/></svg></button><button aria-label="Close document"><svg class="ic"><use href="#wx"/></svg></button></div>
  <div class="grip"><i class="lar"></i><i class="lar"></i><i class="lar"></i></div>
  <div class="tasks d-flex flex-column">
   <button class="on" aria-label="Resources"><svg class="ic" viewBox="0 0 24 24"><path d="M17 2h3v8h-3z" fill="#b8402c"/><path d="M4 12h16v11H4z" fill="#f8e69a" stroke="#8a6a20" stroke-width="1.400"/><path d="M1 13L12 3l11 10" fill="none" stroke="#8a6a20" stroke-width="4"/><path d="M1 13L12 3l11 10" fill="none" stroke="#f0d050" stroke-width="2"/><path d="M9 14h6v9H9z" fill="#fff4c8" stroke="#a8601c" stroke-width="1.400"/></svg></button>
   <button aria-label="Design library"><svg class="ic" viewBox="0 0 24 24"><path d="M1 12l4-3 4 3v11H1z" fill="#3a9c44" stroke="#142818" stroke-width="1.500"/><path d="M9 8l4-4 3 3v16H9z" fill="#e8b83a" stroke="#142818" stroke-width="1.500"/><path d="M16 5l4-3 3 2v16l-7 3z" fill="#3c62b8" stroke="#141828" stroke-width="1.500"/></svg></button>
   <button aria-label="File explorer"><svg class="ic" viewBox="0 0 24 24"><path d="M2 3h8l2 3h9v15H2z" fill="#f4d87a" stroke="#9c7418" stroke-width="1.300"/><path d="M2 21l4-12h17l-4 12z" fill="#fbe9a4" stroke="#9c7418" stroke-width="1.300"/></svg></button>
   <button aria-label="Search"><svg class="ic" viewBox="0 0 24 24"><path d="M2 5l9-3 11 3v13l-10 4-9-4z" fill="#c9323c" stroke="#7a1620"/><path d="M9 8q-5-1-4 3 5 1 3 5H5" fill="none" stroke="#fff" stroke-width="2"/><circle cx="15" cy="13" r="4.500" fill="#e8b8c0" stroke="#444" stroke-width="1.600"/><path d="M18 17l5 6" stroke="#444" stroke-width="2.600"/></svg></button>
   <button aria-label="View palette"><svg class="ic" viewBox="0 0 24 24"><path d="M1 1h22v14H1z" fill="#f2f3e8" stroke="#4c4e58" stroke-width="1.400"/><path d="M4 4h8v3H4zM4 10h8v3H4zM15 4h5v3h-5zM15 9h5v4h-5z" fill="#b7c4a4" stroke="#4c4e58"/><path d="M1 18h6v-2l5 4-5 4v-3H1z" fill="#1c22a8"/></svg></button>
   <button aria-label="Appearances"><svg class="ic"><use href="#ball"/></svg></button>
   <button aria-label="Custom properties"><svg class="ic" viewBox="0 0 24 24"><path d="M2 8h18v15H2z" fill="#eeeef2" stroke="#666" stroke-width="1.300"/><path d="M4 7l6-5 13-1v4l-6 1-4 4-3-1 1-3z" fill="#e8cf86" stroke="#6a5528"/></svg></button>
  </div>
  <svg class="triad" viewBox="0 -10 84 94"><path d="M43 46V18" stroke="#12652a" stroke-width="5"/><path d="M43 9l7 12-7 5-7-5z" fill="#1f8a36"/><path d="M43 46L22 57" stroke="#2121a8" stroke-width="5"/><path d="M13 62l7-11 7 10z" fill="#1c1cc8" stroke="#1c1cc8"/><path d="M43 46l22 11" stroke="#b0161c" stroke-width="5"/><path d="M76 63l-9-12-6 11z" fill="#d0161c"/><g font-family="Liberation Sans" font-size="16"><text x="43" y="7" text-anchor="middle" fill="#256b3a">Y</text><text x="4" y="72" fill="#2121c8">Z</text><text x="73" y="72" fill="#e0203c">X</text></g></svg>
  <div class="iso">*Isometric</div>
 </section>
</main>

<div class="sheets d-flex flex-shrink-0">
 <button class="nav-b" aria-label="First"><svg viewBox="0 0 14 14"><path d="M2 1v12M12 1v12L4 7z" fill="#82869a" stroke="#82869a" stroke-width="2"/></svg></button><button class="nav-b" aria-label="Previous"><svg viewBox="0 0 14 14"><path d="M10 1v12L3 7z" fill="#82869a"/></svg></button><button class="nav-b" aria-label="Next"><svg viewBox="0 0 14 14"><path d="M4 1v12l7-6z" fill="#82869a"/></svg></button><button class="nav-b" aria-label="Last"><svg viewBox="0 0 14 14"><path d="M12 1v12M2 1v12l8-6z" fill="#82869a" stroke="#82869a" stroke-width="2"/></svg></button>
 <button class="sheet on">Model</button><button class="sheet">Motion Study 1</button>
</div>
<footer class="status d-flex align-items-center flex-shrink-0">
 <span>Adds a reference plane.</span>
 <span class="cell ms-auto">Editing Part</span><span class="cell me-5">&nbsp;</span>
 <svg class="ic ms-5" viewBox="0 0 24 24"><path d="M10 3l7-2 5 3v8l-9 10q-3 1-6-1l-4-4q-2-3 0-6z" fill="#f7dc3c" stroke="#8a6400" stroke-width="1.800"/><circle cx="17" cy="6" r="2.500" fill="#fff" stroke="#8a6400" stroke-width="1.400"/><path d="M9 9l6 5M7 12l6 5" stroke="#a87c00" stroke-width="1.400"/></svg>
</footer>
</div>

<ul class="sw-menu menu-main">
 <li><button><i class="slot"></i>Boss/Base<i class="rar"></i></button></li>
 <li><button><i class="slot"></i>Cut<i class="rar"></i></button></li>
 <li><button><i class="slot"></i>Features<i class="rar"></i></button></li>
 <li><button><i class="slot"></i>Pattern/Mirror<i class="rar"></i></button></li>
 <li><button><i class="slot"></i>Fastening Feature<i class="rar"></i></button></li>
 <li><button><i class="slot"></i>FeatureWorks<i class="rar"></i></button></li>
 <li><hr></li>
 <li><button><i class="slot"></i>Surface<i class="rar"></i></button></li>
 <li><button><i class="slot"></i>Face<i class="rar"></i></button></li>
 <li><button><i class="slot"></i>Curve<i class="rar"></i></button></li>
 <li><button class="rest"><i class="slot"></i>Reference Geometry<i class="rar lite"></i></button></li>
 <li><hr></li>
 <li><button><i class="slot"></i>Sheet Metal<i class="rar"></i></button></li>
 <li><button><i class="slot"></i>Weldments<i class="rar"></i></button></li>
 <li><button><i class="slot"></i>Molds<i class="rar"></i></button></li>
 <li><hr></li>
 <li><button><i class="slot"><svg class="ic" viewBox="0 0 24 24"><path d="M2 12h6l2 2h6v9H2z" fill="#f3d870" stroke="#a07818" stroke-width="1.400"/><path d="M10 3l5-2 3 4 4 1 1 6-5 5-4-3-3-5z" fill="#e8c44a" stroke="#8a6410" stroke-width="1.400"/><path d="M14 5l4 7M18 5l-3 9" stroke="#8a6410"/><path d="M1 8q0-6 6-5M5 1l4 2-4 3" fill="none" stroke="#2030b8" stroke-width="1.600"/></svg></i>Part...</button></li>
 <li><button disabled><i class="slot"></i>Mirror Part...</button></li>
 <li><hr></li>
 <li><button><i class="slot"><svg class="ic"><use href="#sk"/></svg></i>Sketch</button></li>
 <li><button><i class="slot"><svg class="ic"><use href="#sk3d"/></svg></i>3D Sketch</button></li>
 <li><button disabled><i class="slot"><svg class="ic" viewBox="0 0 24 24"><path d="M2 1l20 4v18L2 20zM4 18l14-11M6 6l10 4M8 20l12-9M12 3l3 16" fill="none" stroke="#a6a7ae" stroke-width="1.500" stroke-dasharray="5 2"/></svg></i>3D Sketch On Plane</button></li>
 <li><button disabled><i class="slot"></i>Derived Sketch</button></li>
 <li><button disabled><i class="slot"></i>Sketch From Drawing</button></li>
 <li><button><i class="slot"></i>DXF/DWG...</button></li>
 <li><button><i class="slot"></i>Design Study<i class="rar"></i></button></li>
 <li><hr></li>
 <li><button><i class="slot"></i>Tables<i class="rar"></i></button></li>
 <li><button><i class="slot"></i>Annotations<i class="rar"></i></button></li>
 <li><hr></li>
 <li><button><i class="slot"></i>Object...</button></li>
 <li><button><i class="slot"><svg class="ic" viewBox="0 0 24 24"><circle cx="12" cy="11" r="11" fill="#1c6f9c"/><path d="M4 5q6-6 13-3l-3 6-5 1-4 5-3-2zM15 10l6-2q2 5-2 10l-5-3z" fill="#35b08a"/><circle cx="9" cy="6" r="3.500" fill="#d8f4f8" opacity=".6"/><rect x="7" y="17" width="9" height="6" rx="3" fill="#eee" stroke="#222" stroke-width="1.500"/><rect x="14" y="17" width="9" height="6" rx="3" fill="#ccc" stroke="#222" stroke-width="1.500"/></svg></i>Hyperlink...</button></li>
 <li><button><i class="slot"></i>Picture...</button></li>
 <li><hr></li>
 <li><button><i class="slot"></i>Customize Menu</button></li>
</ul>

<ul class="sw-menu menu-sub">
 <li><button class="rest"><i class="slot"><svg class="ic" viewBox="0 0 24 24"><path d="M1 1l5 5M18 18l5 5" stroke="#1d6a2c" stroke-width="2.200"/><path d="M12 2l10 10-10 10L2 12z" fill="#f4e42c" stroke="#7b6400" stroke-width="1.600"/><path d="M9 9l6 6" stroke="#7b6400" stroke-width="1.500"/></svg></i>Plane...</button></li>
 <li><button><i class="slot"><svg class="ic" viewBox="0 0 24 24"><path d="M1 1h22v22H1z" fill="#9cbcec" stroke="#4a78c4" stroke-width="1.600"/><path d="M6 9l3-3h10v8l-3 4H6z" fill="#8cc83c" stroke="#3c6a10" stroke-width="1.500"/><path d="M9 10h6v5H9z" fill="#e8e060" stroke="#3c6a10" stroke-width="1.400"/></svg></i>Live Section Plane</button></li>
 <li><button><i class="slot"><svg class="ic" viewBox="0 0 24 24"><path d="M1 1l3 3M6 6l2 2M9 9l7 7M17 17l1 1M20 20l3 3" stroke="#187a34" stroke-width="2.600"/></svg></i>Axis...</button></li>
 <li><button><i class="slot"><svg class="ic" viewBox="0 0 24 24"><path d="M9 13V4M5 6l4-5 4 5M9 13h12M17 9l5 4-5 4M9 13l-6 7M2 15v7h7" fill="none" stroke="#187a34" stroke-width="2.400"/></svg></i>Coordinate System...</button></li>
 <li><button><i class="slot"><svg class="ic" viewBox="0 0 24 24"><path d="M12 5v14M5 12h14M7 7l10 10M17 7L7 17" stroke="#128a2c" stroke-width="2.200"/></svg></i>Point...</button></li>
 <li><button><i class="slot"><svg class="ic" viewBox="0 0 24 24"><path d="M1 5l3-3h10v14l-3 3H1z" fill="#f4d43a" stroke="#8a6400" stroke-width="1.600"/><path d="M4 8h7v8H4z" fill="#fae878" stroke="#8a6400"/><path d="M14 18V4q0-3 4-3t4 3v15q0 3-3 3t-3-3V7h3v11" fill="none" stroke="#444650" stroke-width="1.700"/></svg></i>Mate Reference...</button></li>
 <li><hr></li>
 <li><button><i class="slot"></i>Customize Menu</button></li>
</ul>
</body>
</html>
